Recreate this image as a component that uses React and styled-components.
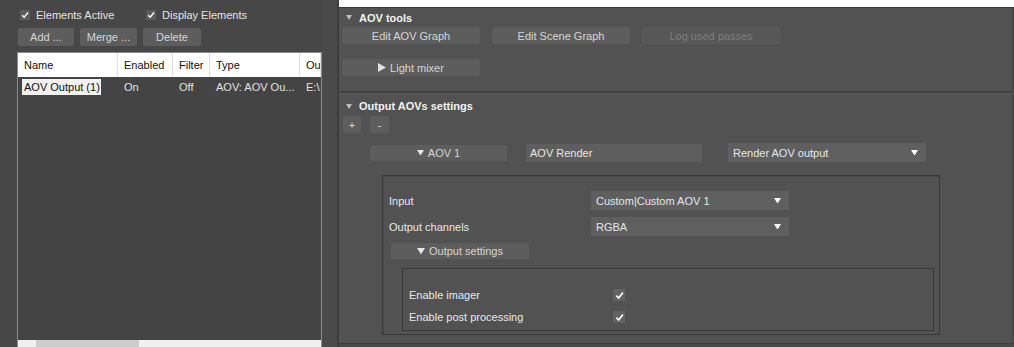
import React from 'react';
import styled, { createGlobalStyle } from 'styled-components';

const GlobalStyle = createGlobalStyle`
  html, body { margin: 0; padding: 0; background: #4a4a4a; overflow: hidden; }
  body { font-family: "Liberation Sans", Arial, sans-serif; font-size: 11px; }
  * { box-sizing: border-box; }
`;

const Window = styled.div`
  display: flex;
  width: 1014px;
  height: 347px;
  overflow: hidden;
  background: #484848;
`;

const LeftPanel = styled.div`
  width: 322px;
  display: flex;
  flex-direction: column;
  padding-top: 8px;
  background: #474747;
`;

const CheckRow = styled.div`
  display: flex;
  padding-left: 20px;
  height: 13px;
  align-items: center;
`;

const CheckItem = styled.label`
  display: flex;
  align-items: center;
  gap: 6px;
  width: ${p => p.$w || 'auto'};
  color: #e4e4e4;
`;

const Box = styled.span`
  width: ${p => p.$s || 10}px;
  height: ${p => p.$s || 10}px;
  background: ${p => p.$bg || '#5c5c5c'};
  display: inline-flex;
  align-items: center;
  justify-content: center;
  flex-shrink: 0;
`;

const ToolRow = styled.div`
  display: flex;
  gap: 6px;
  padding-left: 18px;
  margin-top: 7px;
`;

const Btn = styled.div`
  width: ${p => p.$w}px;
  height: ${p => p.$h || 17}px;
  background: ${p => (p.$disabled ? '#575757' : '#5d5d5d')};
  color: ${p => (p.$disabled ? '#7e7e7e' : '#d6d6d6')};
  border-radius: 2px;
  display: flex;
  align-items: center;
  justify-content: center;
  gap: 4px;
  flex-shrink: 0;
  box-shadow: ${p => (p.$disabled ? 'inset 0 0 0 1px #5c5c5c' : 'none')};
`;

const List = styled.div`
  margin: 6px 0 0 17px;
  flex: 1;
  border: 1px solid #8c8c8c;
  border-bottom: none;
  background: #444444;
  display: flex;
  flex-direction: column;
  overflow: hidden;
`;

const ListGrid = styled.div`
  display: grid;
  grid-template-columns: 100px 55px 37px 90px 1fr;
  height: ${p => p.$h}px;
  background: ${p => p.$bg || 'transparent'};
  color: ${p => p.$color || '#e2e2e2'};
  white-space: nowrap;
  overflow: hidden;
`;

const HeadCell = styled.div`
  display: flex;
  align-items: center;
  padding-left: 6px;
  border-right: 1px solid #e0e0e0;
  overflow: hidden;
`;

const Cell = styled.div`
  display: flex;
  align-items: center;
  padding-left: ${p => p.$pad ?? 6}px;
  overflow: hidden;
`;

const Selected = styled.span`
  background: #f0f0f0;
  color: #111;
  padding: 2px 1px 2px 2px;
`;

const ListBody = styled.div`
  flex: 1;
`;

const HScroll = styled.div`
  height: 7px;
  background: #f0f0f0;
  display: flex;
  align-items: flex-start;
  padding-left: 18px;
`;

const Thumb = styled.div`
  width: 103px;
  height: 7px;
  background: #cdcdcd;
`;

const Gutter = styled.div`
  width: 17px;
  background: #4a4a4a;
  border-right: 2px solid #3d3d3d;
`;

const RightSide = styled.div`
  flex: 1;
  display: flex;
  flex-direction: column;
`;

const TopStrip = styled.div`
  height: 8px;
  background: #ffffff;
  border-bottom: 1px solid #3a3a3a;
`;

const Panel = styled.div`
  height: 336px;
  background: #525252;
  border-right: 2px solid #484848;
  border-bottom: 1px solid #3c3c3c;
`;

const Rollout = styled.div`
  padding: 0 0 ${p => p.$pb || 0}px 3px;
  border-bottom: ${p => (p.$sep ? '2px solid #414141' : 'none')};
  box-shadow: ${p => (p.$sep ? '0 1px 0 #5a5a5a' : 'none')};
`;

const RolloutHead = styled.div`
  height: ${p => p.$h}px;
  padding-top: ${p => p.$pt || 0}px;
  display: flex;
  align-items: center;
  gap: 7px;
  padding-left: 4px;
  color: #f2f2f2;
  font-weight: bold;
`;

const Row = styled.div`
  display: flex;
  align-items: center;
  gap: ${p => p.$gap || 0}px;
  margin-top: ${p => p.$mt || 0}px;
  padding-left: ${p => p.$pl || 0}px;
`;

const TextBox = styled.div`
  width: ${p => p.$w}px;
  height: 18px;
  margin-left: 19px;
  background: #5e5e5e;
  color: #e6e6e6;
  display: flex;
  align-items: center;
  padding-left: 4px;
`;

const Select = styled.div`
  width: 198px;
  height: 19px;
  margin-left: ${p => p.$ml || 0}px;
  background: #5f5f5f;
  color: #e6e6e6;
  display: flex;
  align-items: center;
  justify-content: space-between;
  padding: 0 8px 0 5px;
`;

const Group = styled.div`
  margin: 13px 0 0 40px;
  width: 558px;
  height: 160px;
  border: 1px solid #393939;
  box-shadow: inset 1px 1px 0 #4a4a4a;
  padding: 15px 0 0 6px;
`;

const FormGrid = styled.div`
  display: grid;
  grid-template-columns: 202px 198px;
  row-gap: 7px;
  color: #e8e8e8;
  align-items: center;
`;

const InnerGroup = styled.div`
  margin: 9px 0 0 13px;
  width: 532px;
  height: 63px;
  border: 1px solid #393939;
  padding: 15px 0 0 6px;
`;

const CheckGrid = styled.div`
  display: grid;
  grid-template-columns: 204px 12px;
  grid-auto-rows: 22px;
  align-items: center;
  color: #e8e8e8;
`;

const Check = ({ size = 8 }) => (
  <svg width={size} height={size} viewBox="0 0 10 10">
    <path d="M1.5 5.2 L4 7.8 L8.8 1.8" fill="none" stroke="#ffffff" strokeWidth="1.8" />
  </svg>
);

const DownTri = ({ w = 7, color = '#ffffff' }) => (
  <svg width={w} height={w * 0.8} viewBox="0 0 10 8">
    <path d="M0 0 H10 L5 8 Z" fill={color} />
  </svg>
);

const RightTri = () => (
  <svg width="8" height="9" viewBox="0 0 8 9">
    <path d="M0 0 L8 4.5 L0 9 Z" fill="#e0e0e0" />
  </svg>
);

const SmallTri = () => (
  <svg width="6" height="5" viewBox="0 0 10 8">
    <path d="M0 0 H10 L5 8 Z" fill="#bdbdbd" />
  </svg>
);

export default function App() {
  return (
    <Window>
      <GlobalStyle />
      <LeftPanel>
        <CheckRow>
          <CheckItem $w="126px">
            <Box><Check /></Box>
            Elements Active
          </CheckItem>
          <CheckItem>
            <Box><Check /></Box>
            Display Elements
          </CheckItem>
        </CheckRow>
        <ToolRow>
          <Btn $w={56} $h={18}>Add ...</Btn>
          <Btn $w={57} $h={18}>Merge ...</Btn>
          <Btn $w={58} $h={18}>Delete</Btn>
        </ToolRow>
        <List>
          <ListGrid $h={24} $bg="#ffffff" $color="#111">
            <HeadCell>Name</HeadCell>
            <HeadCell>Enabled</HeadCell>
            <HeadCell>Filter</HeadCell>
            <HeadCell>Type</HeadCell>
            <HeadCell>Ou</HeadCell>
          </ListGrid>
          <ListGrid $h={20}>
            <Cell $pad={4}><Selected>AOV Output (1)</Selected></Cell>
            <Cell>On</Cell>
            <Cell>Off</Cell>
            <Cell>AOV: AOV Ou...</Cell>
            <Cell>E:\</Cell>
          </ListGrid>
          <ListBody />
          <HScroll><Thumb /></HScroll>
        </List>
      </LeftPanel>
      <Gutter />
      <RightSide>
        <TopStrip />
        <Panel>
          <Rollout $sep $pb={15}>
            <RolloutHead $h={19}><SmallTri />AOV tools</RolloutHead>
            <Row $gap={12}>
              <Btn $w={138}>Edit AOV Graph</Btn>
              <Btn $w={138}>Edit Scene Graph</Btn>
              <Btn $w={138} $disabled>Log used passes</Btn>
            </Row>
            <Row $mt={15}>
              <Btn $w={138}><RightTri />Light mixer</Btn>
            </Row>
          </Rollout>
          <Rollout>
            <RolloutHead $h={23} $pt={3}><SmallTri />Output AOVs settings</RolloutHead>
            <Row $gap={9} $pl={1}>
              <Btn $w={18}>+</Btn>
              <Btn $w={19}>-</Btn>
            </Row>
            <Row $mt={10} $pl={28}>
              <Btn $w={137} $h={16}><DownTri w={7} color="#e6e6e6" />AOV 1</Btn>
              <TextBox $w={176}>AOV Render</TextBox>
              <Select $ml={26}>
                Render AOV output
                <DownTri w={7} />
              </Select>
            </Row>
            <Group>
              <FormGrid>
                <span>Input</span>
                <Select>
                  Custom|Custom AOV 1
                  <DownTri w={7} />
                </Select>
                <span>Output channels</span>
                <Select>
                  RGBA
                  <DownTri w={7} />
                </Select>
              </FormGrid>
              <Row $mt={7} $pl={2}>
                <Btn $w={138} $h={16}><DownTri w={8} color="#e6e6e6" />Output settings</Btn>
              </Row>
              <InnerGroup>
                <CheckGrid>
                  <span>Enable imager</span>
                  <Box $bg="#626262" $s={12}><Check size={9} /></Box>
                  <span>Enable post processing</span>
                  <Box $bg="#626262" $s={12}><Check size={9} /></Box>
                </CheckGrid>
              </InnerGroup>
            </Group>
          </Rollout>
        </Panel>
      </RightSide>
    </Window>
  );
}
